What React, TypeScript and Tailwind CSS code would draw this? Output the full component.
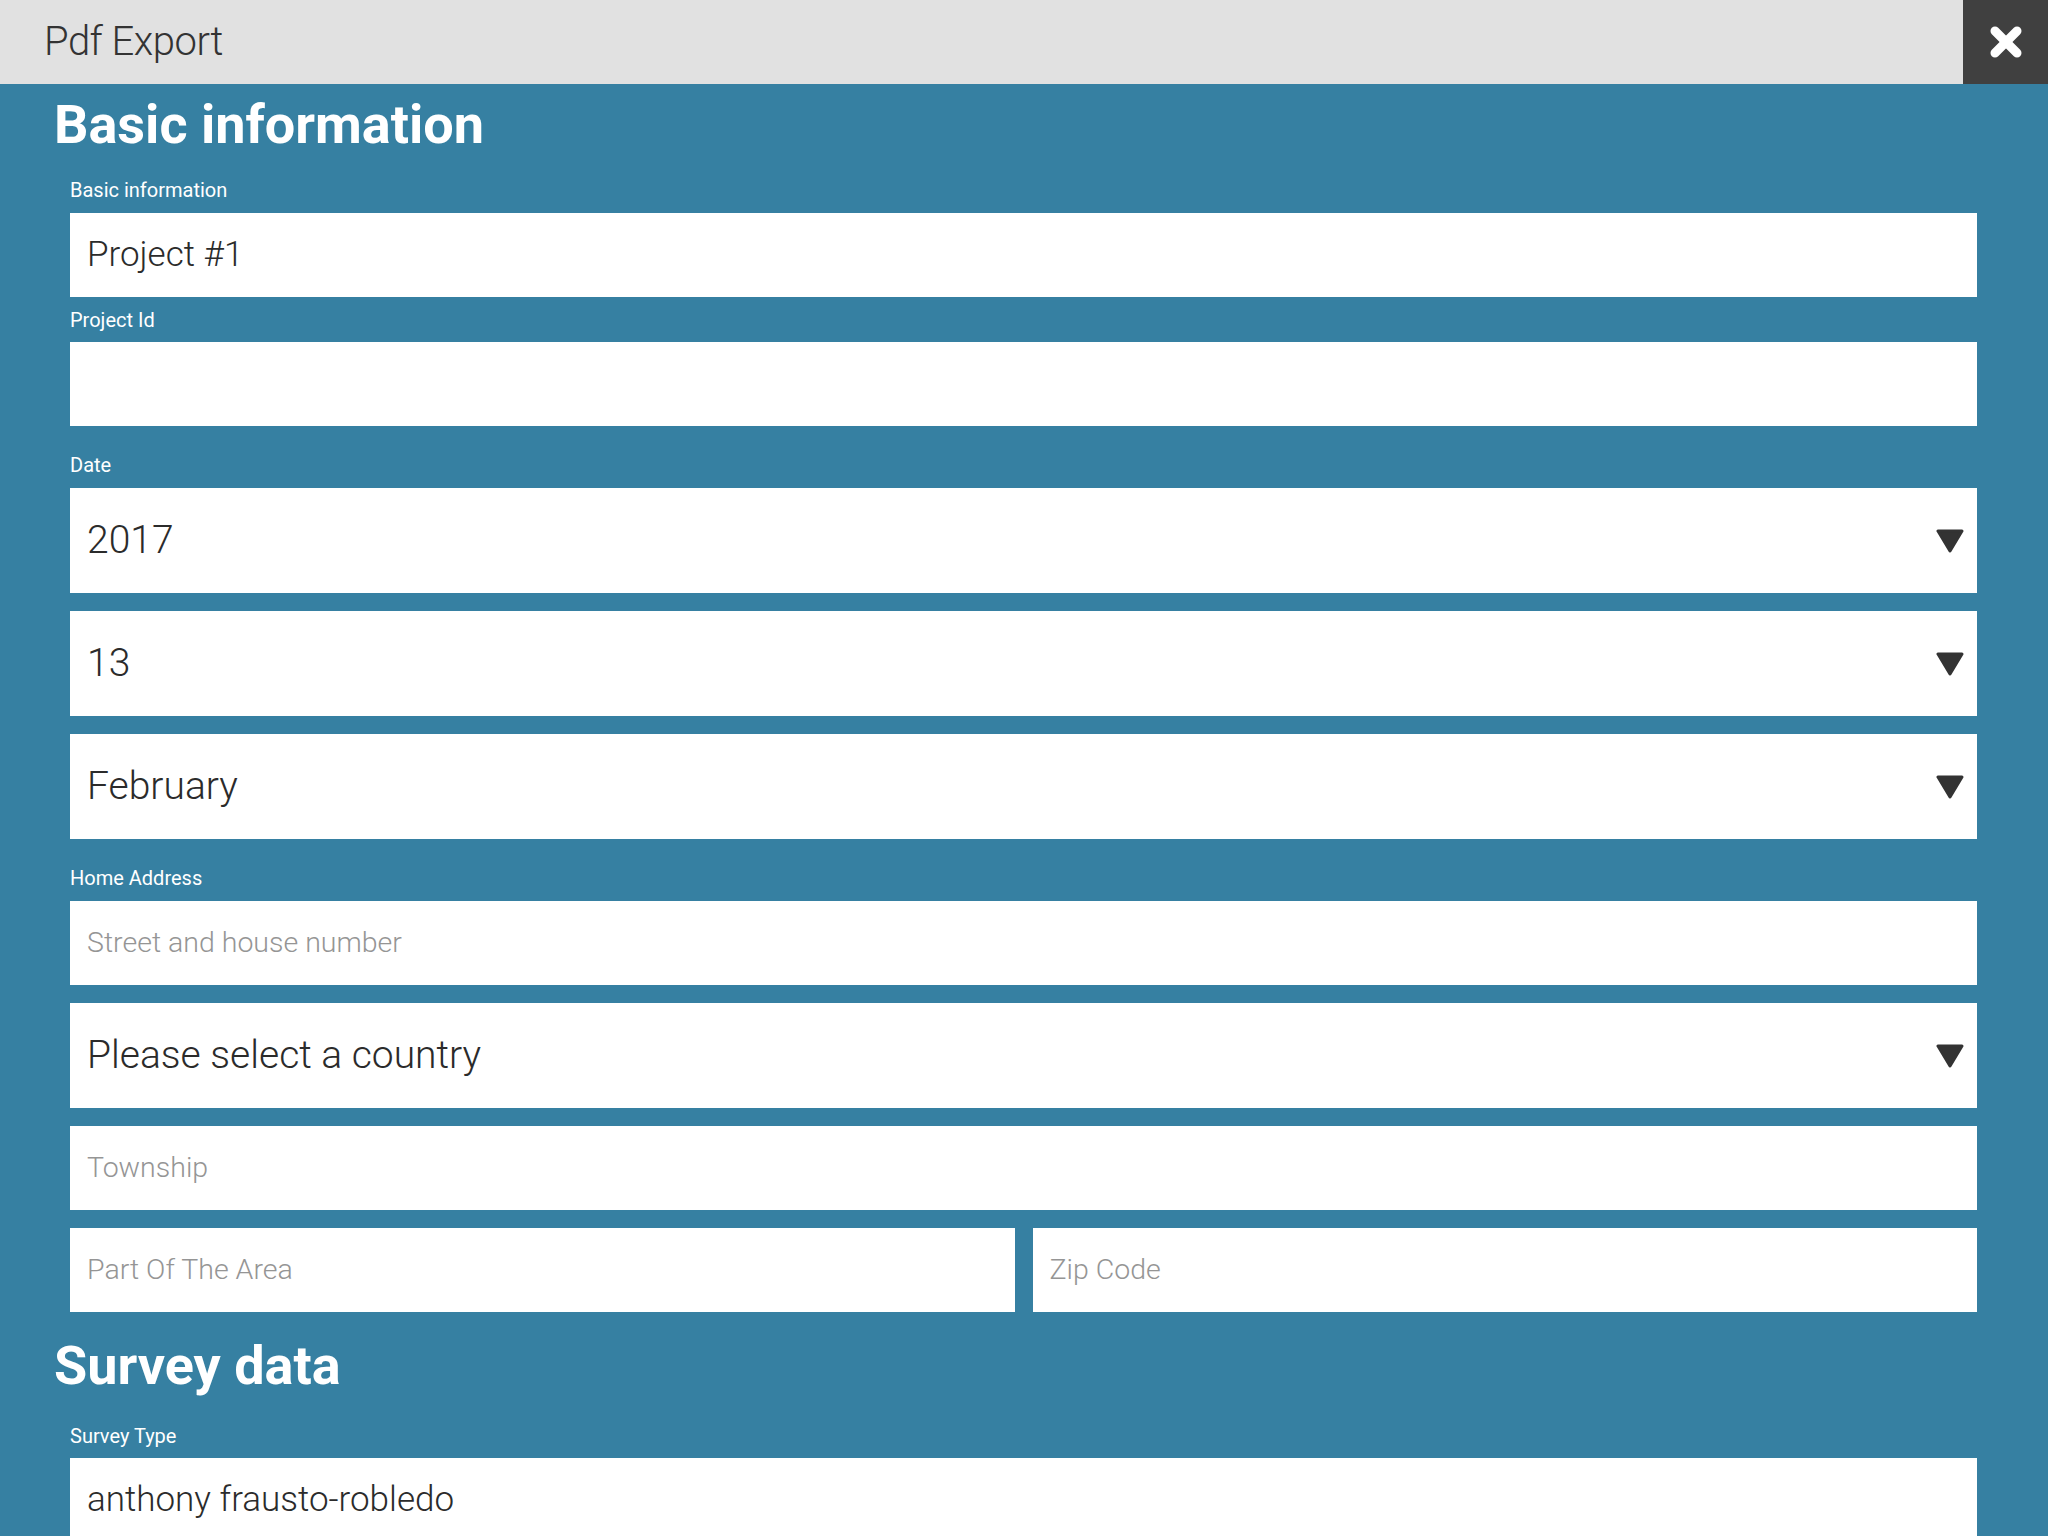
import React from "react";

const Arrow = () => (
  <svg width="28" height="24" viewBox="0 0 28 24" className="shrink-0">
    <polygon points="2,2 26,2 14,22" fill="#333333" stroke="#333333" strokeWidth="3" strokeLinejoin="round" />
  </svg>
);

const Label = ({ children, className = "" }: { children: React.ReactNode; className?: string }) => (
  <div className={"ml-[16px] text-[20px] leading-[24px] text-white " + className}>{children}</div>
);

const TextBox = ({ value, placeholder, className = "" }: { value?: string; placeholder?: string; className?: string }) => (
  <div className={"h-[84px] bg-white flex items-center pl-[17px] " + className}>
    {value ? (
      <span className="text-[35px] font-light text-[#2b2b2b]">{value}</span>
    ) : placeholder ? (
      <span className="text-[28.5px] font-light text-[#959595]">{placeholder}</span>
    ) : null}
  </div>
);

const SelectBox = ({ value, className = "" }: { value: string; className?: string }) => (
  <div className={"h-[105px] bg-white flex items-center justify-between pl-[17px] pr-[13px] " + className}>
    <span className="text-[39px] font-light text-[#2b2b2b]">{value}</span>
    <Arrow />
  </div>
);

export default function App() {
  return (
    <div className="w-[2048px] h-[1536px] overflow-hidden bg-[#3680a2]" style={{ fontFamily: "Roboto, 'Noto Sans', sans-serif" }}>
      <div className="h-[84px] flex bg-[#e1e1e1]">
        <div className="flex-1 flex items-center pl-[44px]">
          <span className="text-[40px] font-light text-[#333333] tracking-[-0.5px]">Pdf Export</span>
        </div>
        <div className="w-[85px] h-[84px] bg-[#404040] flex items-center justify-center">
          <svg width="34" height="34" viewBox="0 0 34 34">
            <line x1="6" y1="6" x2="28" y2="28" stroke="white" strokeWidth="9" strokeLinecap="round" />
            <line x1="28" y1="6" x2="6" y2="28" stroke="white" strokeWidth="9" strokeLinecap="round" />
          </svg>
        </div>
      </div>

      <div className="pl-[54px] pr-[71px]">
        <h1 className="mt-[13px] text-[54px] leading-[56px] font-bold text-white">Basic information</h1>

        <Label className="mt-[25px]">Basic information</Label>
        <div className="ml-[16px] mt-[11px]">
          <TextBox value="Project #1" />
        </div>

        <Label className="mt-[11px]">Project Id</Label>
        <div className="ml-[16px] mt-[10px]">
          <TextBox />
        </div>

        <Label className="mt-[27px]">Date</Label>
        <div className="ml-[16px] mt-[11px] flex flex-col gap-[18px]">
          <SelectBox value="2017" />
          <SelectBox value="13" />
          <SelectBox value="February" />
        </div>

        <Label className="mt-[27px]">Home Address</Label>
        <div className="ml-[16px] mt-[11px] flex flex-col gap-[18px]">
          <TextBox placeholder="Street and house number" />
          <SelectBox value="Please select a country" />
          <TextBox placeholder="Township" />
          <div className="grid grid-cols-2 gap-[18px]">
            <TextBox placeholder="Part Of The Area" />
            <TextBox placeholder="Zip Code" />
          </div>
        </div>

        <h1 className="mt-[26px] text-[54px] leading-[56px] font-bold text-white">Survey data</h1>

        <Label className="mt-[30px]">Survey Type</Label>
        <div className="ml-[16px] mt-[10px]">
          <TextBox value="anthony frausto-robledo" />
        </div>
      </div>
    </div>
  );
}
